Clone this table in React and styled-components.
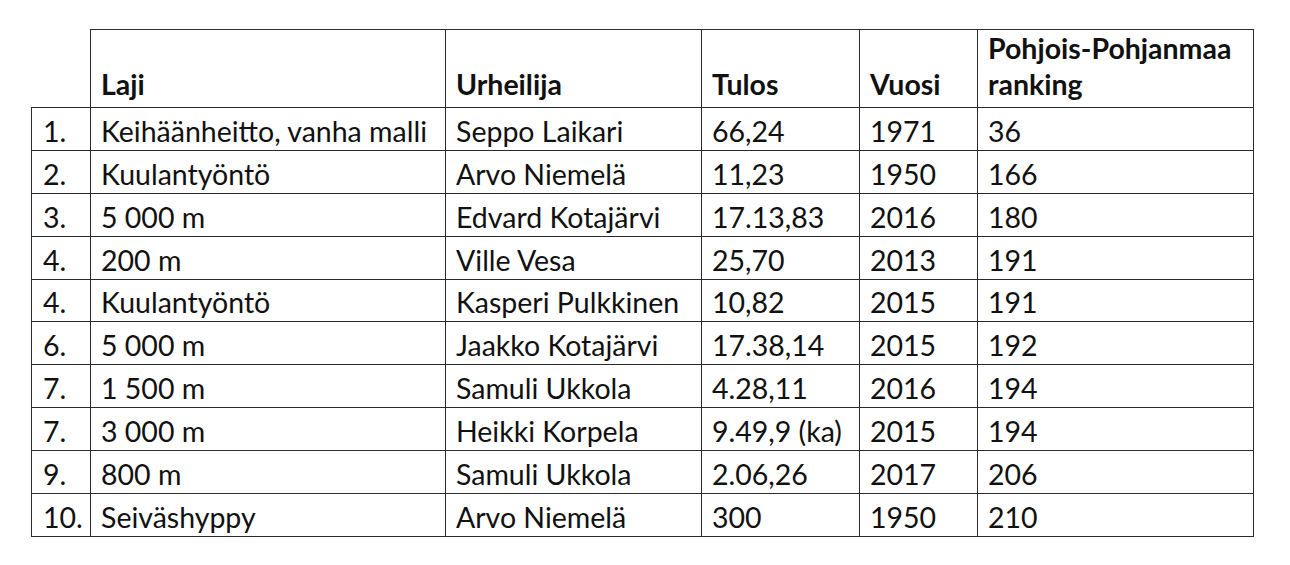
import React from "react";
import styled, { createGlobalStyle } from "styled-components";

const Global = createGlobalStyle`
  html, body { margin: 0; padding: 0; background: #fff; }
  body { font-family: Lato, "Open Sans", sans-serif; color: #111; }
`;

const Page = styled.div`
  padding: 29px 0 0 31px;
`;

const Table = styled.table`
  border-collapse: collapse;
  table-layout: fixed;
  width: 1222px;
  font-size: 28.5px;
`;

const Col = styled.col`
  width: ${(p) => p.$w}px;
`;

const HeadCell = styled.th`
  border: 1.5px solid #2a2a2a;
  text-align: left;
  vertical-align: bottom;
  font-weight: 700;
  line-height: 36px;
  padding: 0 10px 5px 10px;
  height: 73px;
  box-sizing: border-box;
  &:first-child {
    border-top: none;
    border-left: none;
  }
`;

const Cell = styled.td`
  border: 1.5px solid #2a2a2a;
  text-align: left;
  vertical-align: bottom;
  font-weight: 400;
  line-height: 30px;
  padding: 0 10px 4px 10px;
  height: 42.9px;
  box-sizing: border-box;
  white-space: nowrap;
  &:first-child {
    padding-left: 11px;
  }
`;

const widths = [59, 355, 256, 158, 118, 276];

const rows = [
  ["1.", "Keihäänheitto, vanha malli", "Seppo Laikari", "66,24", "1971", "36"],
  ["2.", "Kuulantyöntö", "Arvo Niemelä", "11,23", "1950", "166"],
  ["3.", "5 000 m", "Edvard Kotajärvi", "17.13,83", "2016", "180"],
  ["4.", "200 m", "Ville Vesa", "25,70", "2013", "191"],
  ["4.", "Kuulantyöntö", "Kasperi Pulkkinen", "10,82", "2015", "191"],
  ["6.", "5 000 m", "Jaakko Kotajärvi", "17.38,14", "2015", "192"],
  ["7.", "1 500 m", "Samuli Ukkola", "4.28,11", "2016", "194"],
  ["7.", "3 000 m", "Heikki Korpela", "9.49,9 (ka)", "2015", "194"],
  ["9.", "800 m", "Samuli Ukkola", "2.06,26", "2017", "206"],
  ["10.", "Seiväshyppy", "Arvo Niemelä", "300", "1950", "210"],
];

export default function App() {
  return (
    <Page>
      <Global />
      <Table>
        <colgroup>
          {widths.map((w, i) => (
            <Col key={i} $w={w} />
          ))}
        </colgroup>
        <thead>
          <tr>
            <HeadCell />
            <HeadCell>Laji</HeadCell>
            <HeadCell>Urheilija</HeadCell>
            <HeadCell>Tulos</HeadCell>
            <HeadCell>Vuosi</HeadCell>
            <HeadCell>
              Pohjois-Pohjanmaa
              <br />
              ranking
            </HeadCell>
          </tr>
        </thead>
        <tbody>
          {rows.map((r, i) => (
            <tr key={i}>
              {r.map((c, j) => (
                <Cell key={j}>{c}</Cell>
              ))}
            </tr>
          ))}
        </tbody>
      </Table>
    </Page>
  );
}
